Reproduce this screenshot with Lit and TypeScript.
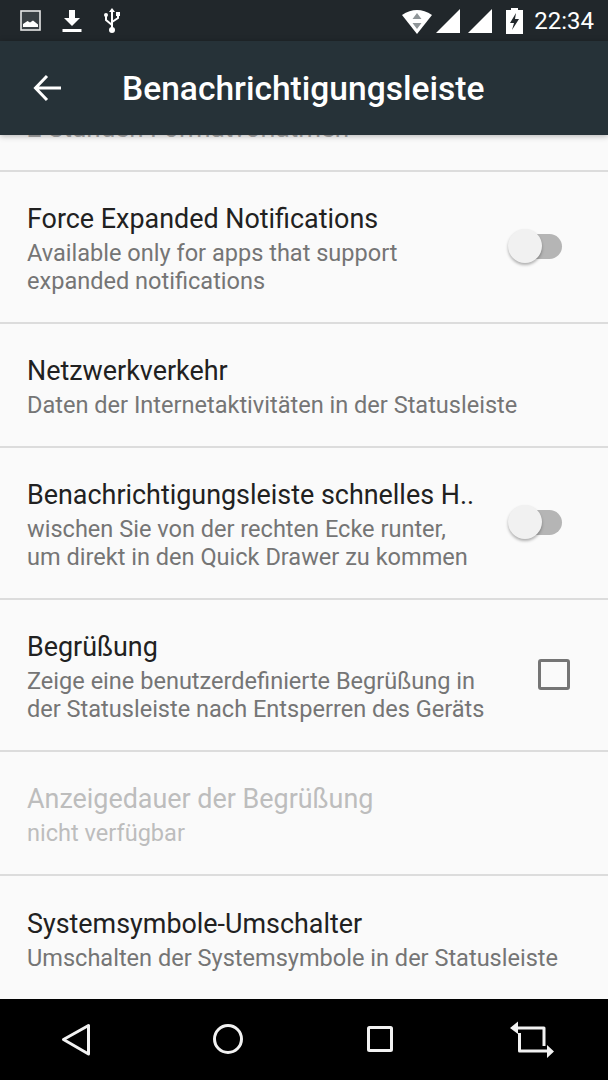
import { LitElement, html, css, svg } from "lit";
import { customElement } from "lit/decorators.js";

type Row = { title: string; sub: string[]; control?: "switch" | "check"; disabled?: boolean; h: number };

const rows: Row[] = [
  { title: "Force Expanded Notifications", sub: ["Available only for apps that support", "expanded notifications"], control: "switch", h: 152 },
  { title: "Netzwerkverkehr", sub: ["Daten der Internetaktivitäten in der Statusleiste"], h: 124 },
  { title: "Benachrichtigungsleiste schnelles H..", sub: ["wischen Sie von der rechten Ecke runter,", "um direkt in den Quick Drawer zu kommen"], control: "switch", h: 152 },
  { title: "Begrüßung", sub: ["Zeige eine benutzerdefinierte Begrüßung in", "der Statusleiste nach Entsperren des Geräts"], control: "check", h: 152 },
  { title: "Anzeigedauer der Begrüßung", sub: ["nicht verfügbar"], disabled: true, h: 124 },
  { title: "Systemsymbole-Umschalter", sub: ["Umschalten der Systemsymbole in der Statusleiste"], h: 124 },
];

@customElement("app-root")
export class AppRoot extends LitElement {
  static styles = css`
    :host { display: block; width: 608px; height: 1080px; font-family: Roboto, "Noto Sans", sans-serif; overflow: hidden; }
    .page { display: flex; flex-direction: column; height: 1080px; background: #fafafa; }
    .status { height: 41px; flex: none; background: #21272b; display: flex; align-items: center; padding: 0 14px 0 20px; color: #fff; }
    .status .left { display: flex; align-items: center; gap: 21px; }
    .status .right { margin-left: auto; display: flex; align-items: center; }
    .gap3 { width: 3px; } .gap8 { width: 8px; } .gap14 { width: 14px; }
    .time { font-size: 24px; font-weight: 400; margin-left: 11px; }
    .toolbar { height: 94px; flex: none; background: #263238; display: flex; align-items: center; padding-left: 33px; color: #fff; position: relative; z-index: 2; box-shadow: 0 1px 6px rgba(0,0,0,.3); }
    .toolbar .title { font-size: 33.55px; font-weight: 500; margin-left: 60px; }
    .list { flex: 1; overflow: hidden; display: flex; flex-direction: column; }
    .clip { flex: none; border-bottom: 2px solid #dcdcdc; height: 35px; overflow: hidden; padding-left: 27px; }
    .clip span { display: block; margin-top: -21px; font-size: 26px; color: #a8a8a8; line-height: 28px; white-space: nowrap; }
    .row { flex: none; box-sizing: border-box; border-bottom: 2px solid #dcdcdc; display: flex; align-items: center; padding-left: 27px; position: relative; }
    .row:last-child { border-bottom: 0; }
    .text { min-width: 0; padding-top: 3px; }
    .t { font-size: 26.9px; line-height: 34px; margin-bottom: 3px; color: #212121; white-space: nowrap; }
    .s { font-size: 23.56px; line-height: 28px; color: #757575; white-space: nowrap; }
    .dis .t, .dis .s { color: #bdbdbd; }
    .ctl { position: absolute; }
    .sw { left: 508px; top: 50%; margin-top: -21px; width: 56px; height: 40px; }
    .track { position: absolute; left: 14px; top: 8px; width: 40px; height: 25px; border-radius: 13px; background: #b5b5b5; }
    .thumb { position: absolute; left: 0; top: 3px; width: 34px; height: 34px; border-radius: 50%; background: #f1f1f1; box-shadow: 0 2px 3px rgba(0,0,0,.3); }
    .chk { left: 538px; top: 50%; margin-top: -16px; width: 32px; height: 31px; box-sizing: border-box; border: 3px solid #757575; border-radius: 3px; }
    .nav { height: 81px; flex: none; background: #000; }
    .nav svg, .status svg, .toolbar svg { display: block; }
  `;

  private icon(w: number, h: number, body: unknown) {
    return html`<svg width=${w} height=${h} viewBox="0 0 ${w} ${h}">${body}</svg>`;
  }

  render() {
    return html`<div class="page">
      <div class="status">
        <div class="left">
          ${this.icon(21, 21, svg`<rect x="1" y="1" width="19" height="19" fill="#3a4044" stroke="#e8e8e8" stroke-width="1.6"/><path d="M3 17 L3 14 L7.5 11 L10 12.5 L13 10.5 L18 14.5 L18 17Z" fill="#fff"/>`)}
          ${this.icon(20, 26, svg`<path d="M7 1h6v8h5l-8 8-8-8h5z" fill="#fff" transform="translate(0 1)"/><rect x="0.5" y="21" width="19" height="3" fill="#fff"/>`)}
          ${this.icon(18, 26, svg`<path d="M9 2v20M9 17L3 12V8M9 14l6-4V6" stroke="#fff" stroke-width="2" fill="none"/><path d="M9 0l3 4H6z" fill="#fff"/><circle cx="9" cy="22" r="3" fill="#fff"/><circle cx="3" cy="7" r="2" fill="#fff"/><rect x="13" y="4" width="4" height="4" fill="#fff"/>`)}
        </div>
        <div class="right">
          ${this.icon(32, 26, svg`<path d="M1 7 Q16 -3 31 7 L16 26Z" fill="#fff"/><path d="M16 5l4.5 6h-9zM16 21l-4.5-6h9z" fill="#8f9598"/>`)}
          <span class="gap3"></span>
          ${this.icon(24, 24, svg`<path d="M24 0V24H0Z" fill="#fff"/>`)}
          <span class="gap8"></span>
          ${this.icon(24, 24, svg`<path d="M24 0V24H0Z" fill="#fff"/>`)}
          <span class="gap14"></span>
          ${this.icon(17, 26, svg`<path d="M5 0h7v2h5v24H0V2h5z" fill="#fff"/><path d="M10 5L4 15h4l-2 7 7-11H9z" fill="#21272b"/>`)}
          <span class="time">22:34</span>
        </div>
      </div>
      <div class="toolbar">
        ${this.icon(29, 28, svg`<path d="M28 14H3M14 2L2.5 14 14 26" stroke="#fff" stroke-width="3" fill="none"/>`)}
        <span class="title">Benachrichtigungsleiste</span>
      </div>
      <div class="list">
        <div class="clip"><span>2 Stunden Formatvorlatmen</span></div>
        ${rows.map((r) => html`<div class="row ${r.disabled ? "dis" : ""}" style="height:${r.h}px">
          <div class="text">
            <div class="t">${r.title}</div>
            ${r.sub.map((l) => html`<div class="s">${l}</div>`)}
          </div>
          ${r.control === "switch" ? html`<div class="ctl sw"><div class="track"></div><div class="thumb"></div></div>` : ""}
          ${r.control === "check" ? html`<div class="ctl chk"></div>` : ""}
        </div>`)}
      </div>
      <div class="nav">
        <svg width="608" height="81" viewBox="0 0 608 81" fill="none" stroke="#f2f2f2" stroke-width="3" stroke-linejoin="round">
          <path d="M88.5 26.5V55L63.5 40.5Z"/>
          <circle cx="228" cy="40" r="13.5"/>
          <rect x="368.5" y="28.5" width="23" height="23" rx="1"/>
          <path d="M518 29H544V47M519.5 34V52H548"/>
          <path d="M518 22.5V35L510 29Z M547 46V59L554 52.5Z" fill="#f2f2f2" stroke="none"/>
        </svg>
      </div>
    </div>`;
  }
}
